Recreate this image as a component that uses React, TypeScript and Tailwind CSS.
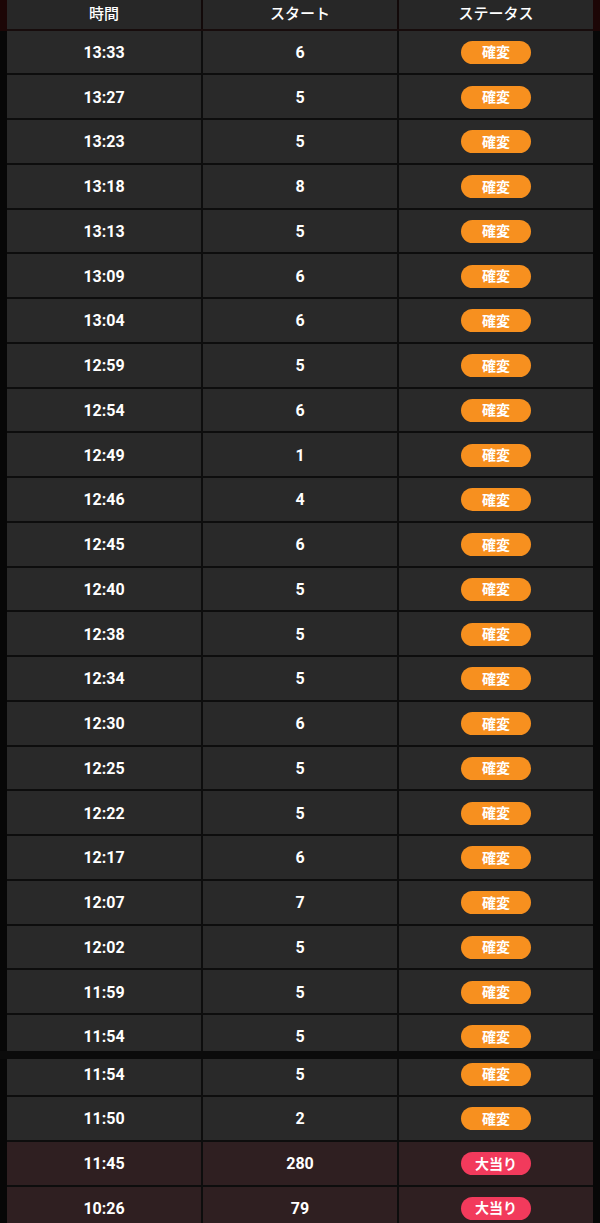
import React from 'react';

type Row = { time: string; start: string; status: 'kakuhen' | 'atari' };

const topRows: Row[] = [
  { time: '13:33', start: '6', status: 'kakuhen' },
  { time: '13:27', start: '5', status: 'kakuhen' },
  { time: '13:23', start: '5', status: 'kakuhen' },
  { time: '13:18', start: '8', status: 'kakuhen' },
  { time: '13:13', start: '5', status: 'kakuhen' },
  { time: '13:09', start: '6', status: 'kakuhen' },
  { time: '13:04', start: '6', status: 'kakuhen' },
  { time: '12:59', start: '5', status: 'kakuhen' },
  { time: '12:54', start: '6', status: 'kakuhen' },
  { time: '12:49', start: '1', status: 'kakuhen' },
  { time: '12:46', start: '4', status: 'kakuhen' },
  { time: '12:45', start: '6', status: 'kakuhen' },
  { time: '12:40', start: '5', status: 'kakuhen' },
  { time: '12:38', start: '5', status: 'kakuhen' },
  { time: '12:34', start: '5', status: 'kakuhen' },
  { time: '12:30', start: '6', status: 'kakuhen' },
  { time: '12:25', start: '5', status: 'kakuhen' },
  { time: '12:22', start: '5', status: 'kakuhen' },
  { time: '12:17', start: '6', status: 'kakuhen' },
  { time: '12:07', start: '7', status: 'kakuhen' },
  { time: '12:02', start: '5', status: 'kakuhen' },
  { time: '11:59', start: '5', status: 'kakuhen' },
  { time: '11:54', start: '5', status: 'kakuhen' },
];

const bottomRows: Row[] = [
  { time: '11:54', start: '5', status: 'kakuhen' },
  { time: '11:50', start: '2', status: 'kakuhen' },
  { time: '11:45', start: '280', status: 'atari' },
  { time: '10:26', start: '79', status: 'atari' },
];

function StatusPill({ status }: { status: Row['status'] }) {
  if (status === 'atari') {
    return (
      <span className="w-[70px] h-[23px] rounded-full bg-[#f23a5c] text-white text-[14px] font-bold flex items-center justify-center leading-none">
        大当り
      </span>
    );
  }
  return (
    <span className="w-[70px] h-[23px] rounded-full bg-[#f7901f] text-white text-[14px] font-bold flex items-center justify-center leading-none">
      確変
    </span>
  );
}

function DataRow({ row }: { row: Row }) {
  const cell = row.status === 'atari' ? 'bg-[#2f1f21]' : 'bg-[#292929]';
  return (
    <div className="h-[44.75px] grid grid-cols-3 gap-x-[2px] border-b-2 border-[#0d0d0d] bg-[#0d0d0d]">
      <div className={`${cell} flex items-center justify-center pt-[2px] text-white text-[16px] font-bold`}>{row.time}</div>
      <div className={`${cell} flex items-center justify-center pt-[2px] text-white text-[16px] font-bold`}>{row.start}</div>
      <div className={`${cell} flex items-center justify-center pt-[1px]`}>
        <StatusPill status={row.status} />
      </div>
    </div>
  );
}

export default function App() {
  return (
    <div
      className="w-[600px] h-[1223px] overflow-hidden bg-[#070707]"
      style={{ fontFamily: 'Roboto, "Noto Sans CJK JP", sans-serif' }}
    >
      {/* top part of the list */}
      <div className="h-[1051px] overflow-hidden">
        <div className="bg-[#1c0606] px-[7px]">
          <div className="h-[30.5px] grid grid-cols-3 gap-x-[2px] border-b-2 border-[#170c0c] bg-[#120909]">
            <div className="bg-[#272727] flex items-center justify-center text-white text-[15px] font-medium">時間</div>
            <div className="bg-[#272727] flex items-center justify-center text-white text-[15px] font-medium">スタート</div>
            <div className="bg-[#272727] flex items-center justify-center text-white text-[15px] font-medium">ステータス</div>
          </div>
        </div>
        <div className="px-[7px]">
          {topRows.map((row, i) => (
            <DataRow key={i} row={row} />
          ))}
        </div>
      </div>

      {/* seam between the two captures */}
      <div className="h-[8px] bg-[#0b0b0b]" />

      {/* bottom part */}
      <div className="h-[164px] overflow-hidden px-[7px]">
        <div className="-mt-[6.75px]">
          {bottomRows.map((row, i) => (
            <DataRow key={i} row={row} />
          ))}
        </div>
      </div>
    </div>
  );
}
